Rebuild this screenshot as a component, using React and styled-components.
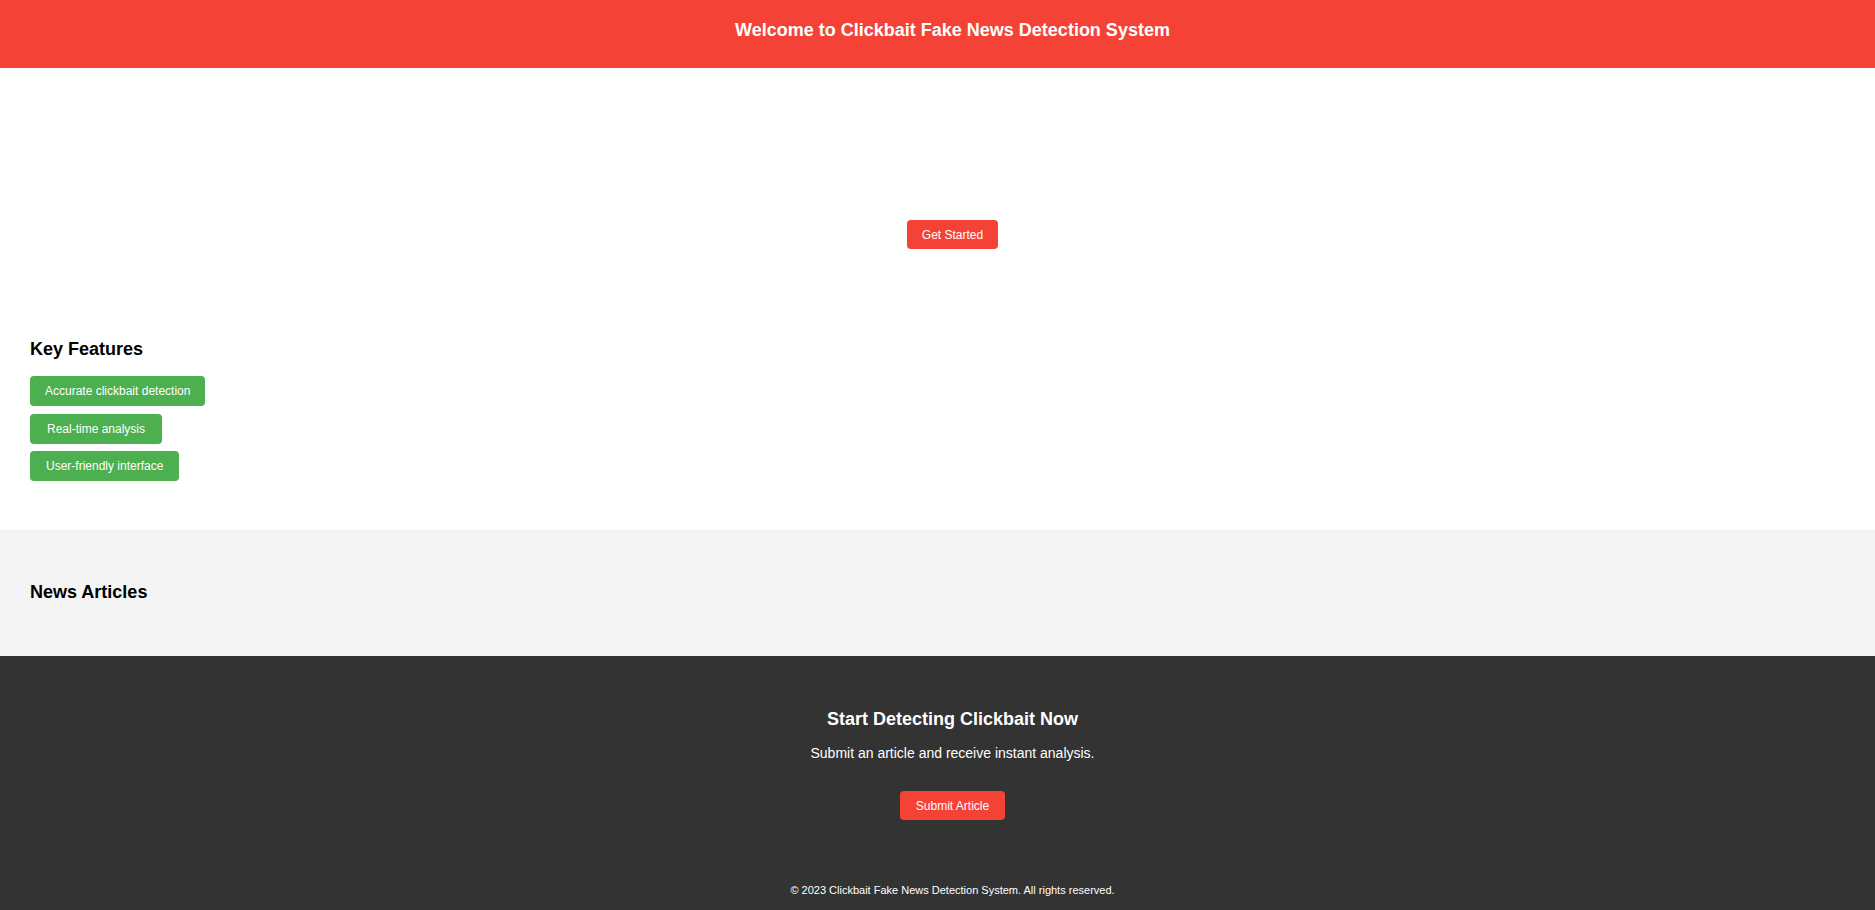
import React from "react"
import styled, { createGlobalStyle } from "styled-components"

const Global = createGlobalStyle`
  html, body {
    overflow-x: hidden;
  }
  body {
    margin: 0;
    font-family: "Liberation Sans", Arial, sans-serif;
    background: #fff;
  }
`

// the original page overflows by 30px, so centred content sits on 1905px
const Page = styled.div`
  width: 1905px;
`

const Header = styled.header`
  background: #f44336;
  height: 68px;
  display: flex;
  align-items: center;
  justify-content: center;
`

const Title = styled.h1`
  margin: 0 0 8px;
  color: #fff;
  font-size: 18px;
  line-height: 21px;
  font-weight: bold;
`

const Hero = styled.section`
  padding: 152px 0 0;
  display: flex;
  justify-content: center;
`

const Button = styled.button`
  border: none;
  border-radius: 4px;
  background: ${(p) => p.color || "#f44336"};
  color: #fff;
  font-family: inherit;
  font-size: 12px;
  line-height: 14px;
  height: ${(p) => p.h || 29}px;
  padding: 0 ${(p) => p.px || 15}px;
  cursor: pointer;
`

const Features = styled.section`
  padding: 90px 30px 49px;
`

const Heading = styled.h2`
  margin: 0;
  font-size: 18px;
  line-height: 21px;
  font-weight: bold;
  color: ${(p) => (p.light ? "#fff" : "#000")};
`

const FeatureList = styled.div`
  margin-top: 16px;
  display: flex;
  flex-direction: column;
  align-items: flex-start;
  gap: 7.5px;
`

const News = styled.section`
  background: #f4f4f4;
  padding: 52px 30px 53px;
`

const Footer = styled.footer`
  background: #333;
  color: #fff;
  text-align: center;
  padding: 53px 0 16px;
`

const Sub = styled.p`
  margin: 15px 0 30px;
  font-size: 14px;
  line-height: 16px;
`

const Copy = styled.p`
  margin: 64px 0 0;
  font-size: 11px;
  line-height: 13px;
`

export default () => {
  return (
    <Page>
      <Global />
      <Header>
        <Title>Welcome to Clickbait Fake News Detection System</Title>
      </Header>
      <Hero>
        <Button>Get Started</Button>
      </Hero>
      <Features>
        <Heading>Key Features</Heading>
        <FeatureList>
          <Button color="#4caf50" h={30}>Accurate clickbait detection</Button>
          <Button color="#4caf50" h={30} px={17}>Real-time analysis</Button>
          <Button color="#4caf50" h={30} px={16}>User-friendly interface</Button>
        </FeatureList>
      </Features>
      <News>
        <Heading>News Articles</Heading>
      </News>
      <Footer>
        <Heading light>Start Detecting Clickbait Now</Heading>
        <Sub>Submit an article and receive instant analysis.</Sub>
        <Button px={16}>Submit Article</Button>
        <Copy>© 2023 Clickbait Fake News Detection System. All rights reserved.</Copy>
      </Footer>
    </Page>
  )
}
